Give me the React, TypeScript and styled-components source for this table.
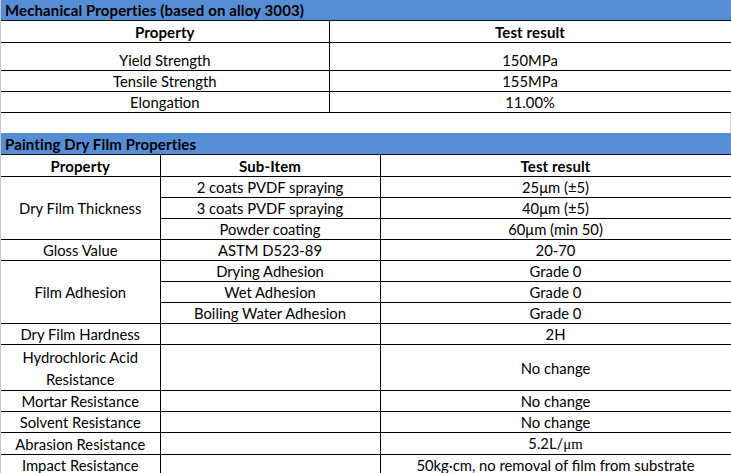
import React from 'react';
import styled, { createGlobalStyle } from 'styled-components';

const GlobalStyle = createGlobalStyle`
  html, body { margin: 0; padding: 0; background: #fff; }
  body {
    font-family: Lato, "Open Sans", "Liberation Sans", sans-serif;
    color: #000;
  }
`;

const Sheet = styled.div`
  width: 731px;
  border-left: 1px solid #c8c8c8;
  box-sizing: border-box;
`;

const Grid = styled.table`
  width: 730px;
  border-collapse: collapse;
  table-layout: fixed;
  font-size: 14.8px;
`;

const TitleCell = styled.th<{ $h: number }>`
  height: ${({ $h }) => $h}px;
  padding: 0 0 0 4px;
  background: #558ed5;
  border-bottom: 1px solid #111;
  text-align: left;
  font-size: 15px;
  font-weight: 700;
  letter-spacing: 0.12px;
  line-height: 18px;
  white-space: nowrap;
  vertical-align: middle;
`;

const HeadCell = styled.th<{ $h?: number; $first?: boolean }>`
  height: ${({ $h }) => $h ?? 21}px;
  padding: 0;
  border: 1px solid #000;
  border-left-width: ${({ $first }) => ($first ? 0 : 1)}px;
  font-size: 15px;
  font-weight: 700;
  letter-spacing: 0.12px;
  text-align: center;
  vertical-align: bottom;
  line-height: 20px;
`;

const Cell = styled.td<{ $h?: number; $mid?: boolean; $first?: boolean }>`
  height: ${({ $h }) => $h ?? 20}px;
  padding: 0;
  border: 1px solid #000;
  border-left-width: ${({ $first }) => ($first ? 0 : 1)}px;
  text-align: center;
  vertical-align: ${({ $mid }) => ($mid ? 'middle' : 'bottom')};
  line-height: ${({ $mid }) => ($mid ? 22 : 20)}px;
  white-space: nowrap;
`;

const Gap = styled.div`
  height: 20px;
  width: 730px;
  border-right: 1px solid #d4d4d4;
  box-sizing: border-box;
`;

const Micro = styled.span`
  font-family: "Liberation Serif", "DejaVu Serif", serif;
`;

const mechanical = [
  { name: 'Yield Strength', value: '150MPa', h: 27 },
  { name: 'Tensile Strength', value: '155MPa', h: 20 },
  { name: 'Elongation', value: '11.00%', h: 20 },
];

type Row = {
  prop?: React.ReactNode;
  span?: number;
  sub?: string;
  result: React.ReactNode;
  h?: number;
  mid?: boolean;
};

const painting: Row[] = [
  { prop: 'Dry Film Thickness', span: 3, sub: '2 coats PVDF spraying', result: '25μm (±5)' },
  { sub: '3 coats PVDF spraying', result: '40μm (±5)' },
  { sub: 'Powder coating', result: '60μm (min 50)' },
  { prop: 'Gloss Value', sub: 'ASTM D523-89', result: '20-70' },
  { prop: 'Film Adhesion', span: 3, sub: 'Drying Adhesion', result: 'Grade 0' },
  { sub: 'Wet Adhesion', result: 'Grade 0' },
  { sub: 'Boiling Water Adhesion', result: 'Grade 0' },
  { prop: 'Dry Film Hardness', sub: '', result: '2H' },
  {
    prop: (
      <>
        Hydrochloric Acid
        <br />
        Resistance
      </>
    ),
    sub: '',
    result: 'No change',
    h: 45,
    mid: true,
  },
  { prop: 'Mortar Resistance', sub: '', result: 'No change' },
  { prop: 'Solvent Resistance', sub: '', result: 'No change' },
  {
    prop: 'Abrasion Resistance',
    sub: '',
    result: (
      <>
        5.2L/<Micro>μm</Micro>
      </>
    ),
  },
  { prop: 'Impact Resistance', sub: '', result: '50kg·cm, no removal of film from substrate' },
];

export default function App() {
  return (
    <>
      <GlobalStyle />
      <Sheet>
        <Grid>
          <colgroup>
            <col style={{ width: 328 }} />
            <col style={{ width: 402 }} />
          </colgroup>
          <thead>
            <tr>
              <TitleCell colSpan={2} $h={20}>Mechanical Properties (based on alloy 3003)</TitleCell>
            </tr>
            <tr>
              <HeadCell $first>Property</HeadCell>
              <HeadCell>Test result</HeadCell>
            </tr>
          </thead>
          <tbody>
            {mechanical.map(r => (
              <tr key={r.name}>
                <Cell $first $h={r.h}>{r.name}</Cell>
                <Cell $h={r.h}>{r.value}</Cell>
              </tr>
            ))}
          </tbody>
        </Grid>
        <Gap />
        <Grid>
          <colgroup>
            <col style={{ width: 159 }} />
            <col style={{ width: 220 }} />
            <col style={{ width: 351 }} />
          </colgroup>
          <thead>
            <tr>
              <TitleCell colSpan={3} $h={21}>Painting Dry Film Properties</TitleCell>
            </tr>
            <tr>
              <HeadCell $first>Property</HeadCell>
              <HeadCell>Sub-Item</HeadCell>
              <HeadCell>Test result</HeadCell>
            </tr>
          </thead>
          <tbody>
            {painting.map((r, i) => (
              <tr key={i}>
                {r.prop !== undefined && (
                  <Cell $first rowSpan={r.span ?? 1} $h={r.h} $mid={r.span !== undefined || r.mid}>
                    {r.prop}
                  </Cell>
                )}
                <Cell $h={r.h} $mid={r.mid}>{r.sub}</Cell>
                <Cell $h={r.h} $mid={r.mid}>{r.result}</Cell>
              </tr>
            ))}
          </tbody>
        </Grid>
      </Sheet>
    </>
  );
}
